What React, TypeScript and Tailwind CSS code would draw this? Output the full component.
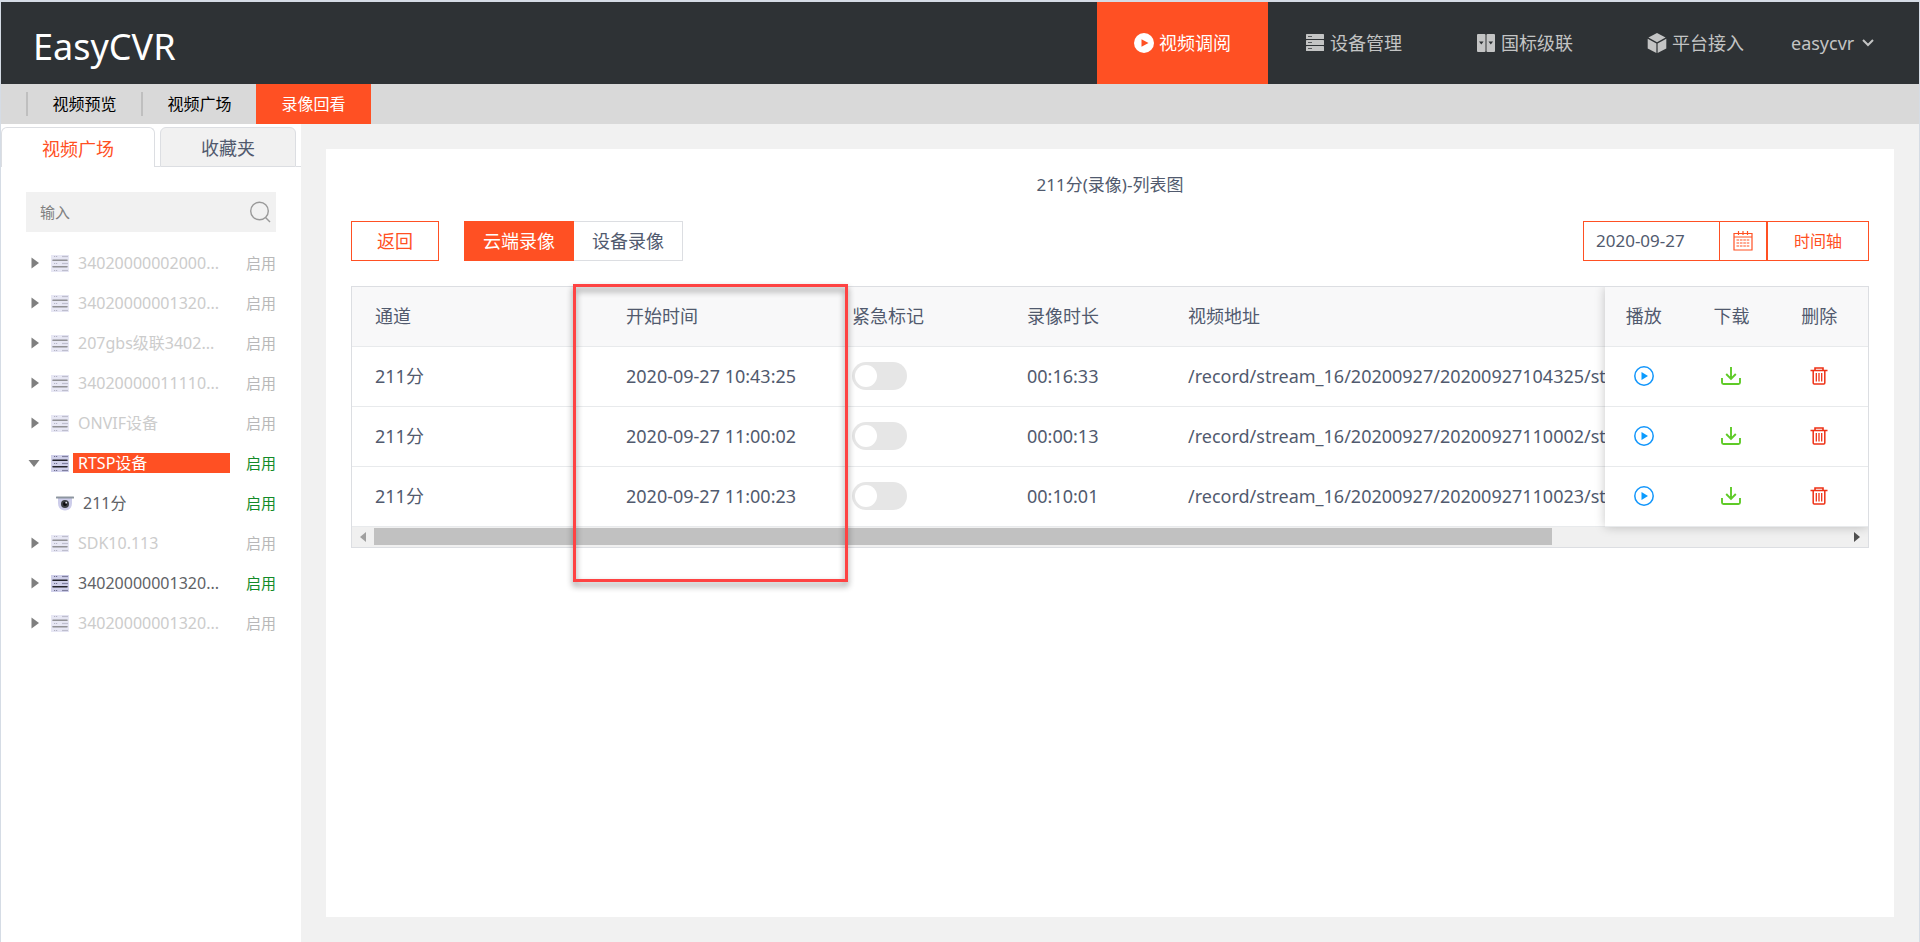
import { useState } from "react";
import type { ReactNode } from "react";

const NAV: { label: string; icon: ReactNode; active?: boolean }[] = [
  { label: "视频调阅", icon: <PlayBadge />, active: true },
  { label: "设备管理", icon: <ServerIcon /> },
  { label: "国标级联", icon: <CascadeIcon /> },
  { label: "平台接入", icon: <CubeIcon /> },
];

type Node = { name: string; online?: boolean; open?: boolean; camera?: boolean; selected?: boolean };

const TREE: Node[] = [
  { name: "34020000002000..." },
  { name: "34020000001320..." },
  { name: "207gbs级联3402..." },
  { name: "34020000011110..." },
  { name: "ONVIF设备" },
  { name: "RTSP设备", online: true, open: true, selected: true },
  { name: "211分", online: true, camera: true },
  { name: "SDK10.113" },
  { name: "34020000001320...", online: true },
  { name: "34020000001320..." },
];

const RECORDS = [
  { channel: "211分", start: "2020-09-27 10:43:25", length: "00:16:33", url: "/record/stream_16/20200927/20200927104325/st" },
  { channel: "211分", start: "2020-09-27 11:00:02", length: "00:00:13", url: "/record/stream_16/20200927/20200927110002/st" },
  { channel: "211分", start: "2020-09-27 11:00:23", length: "00:10:01", url: "/record/stream_16/20200927/20200927110023/st" },
];

function PlayBadge() {
  return (
    <svg viewBox="0 0 20 20" className="size-5" aria-hidden="true">
      <circle cx="10" cy="10" r="10" fill="#fff" />
      <path d="M7.5 6.2v7.6l7-3.8z" fill="#ff5023" />
    </svg>
  );
}

function ServerIcon() {
  return (
    <svg viewBox="0 0 20 20" className="size-5" aria-hidden="true">
      {[1, 7, 13].map((y) => (
        <g key={y}>
          <rect x="1" y={y} width="18" height="5" rx="0.6" fill="#c3c4c4" />
          <rect x="3" y={y + 2} width="4" height="1" fill="#55585a" />
        </g>
      ))}
    </svg>
  );
}

function CascadeIcon() {
  return (
    <svg viewBox="0 0 20 20" className="size-5" aria-hidden="true">
      <rect x="1" y="1" width="8.5" height="18" rx="1" fill="#c3c4c4" />
      <rect x="10.5" y="1" width="8.5" height="18" rx="1" fill="#c3c4c4" />
      <path d="M3 8.5h4.6L5.3 11.5zM12.5 8.5h4.6l-2.3 3z" fill="#2e3235" />
    </svg>
  );
}

function CubeIcon() {
  return (
    <svg viewBox="0 0 20 20" className="size-5" aria-hidden="true">
      <path d="M10 0l8.6 4.6L10 9.2 1.4 4.6z" fill="#c3c4c4" />
      <path d="M.7 5.8l8.7 4.6V20L.7 15.4z" fill="#c3c4c4" />
      <path d="M19.3 5.8l-8.7 4.6V20l8.7-4.6z" fill="#c3c4c4" />
    </svg>
  );
}

function DeviceIcon({ online }: { online?: boolean }) {
  return (
    <svg viewBox="0 0 18 17" className={online ? "h-[17px] w-[18px] shrink-0" : "h-[17px] w-[18px] shrink-0 opacity-50"} aria-hidden="true">
      <rect width="18" height="17" fill="#d0d0ea" />
      {[0, 7, 14].map((y) => (
        <g key={y}>
          <path d={`M3 ${y + 1.5}h1.2M5 ${y + 1.5}h1.2`} stroke="#6d6d8c" />
          <path d={`M11 ${y + 1.5}h6`} stroke="#7f7f9f" strokeWidth="1.2" />
        </g>
      ))}
      <path d="M2 5.3h14M2 11.7h14" stroke="#25252d" strokeWidth="1.6" strokeLinecap="round" />
    </svg>
  );
}

function CameraIcon() {
  return (
    <svg viewBox="0 0 18 15" className="h-[15px] w-[18px] shrink-0" aria-hidden="true">
      <path d="M2 2h14v5c0 5-3 7.500-7 7.500S2 12 2 7z" fill="#cdcdea" />
      <rect x="0" y="0.500" width="18" height="2" rx="0.500" fill="#8d96a0" />
      <circle cx="9" cy="8" r="4" fill="#3c3f45" />
      <circle cx="9" cy="8" r="2" fill="#0c0c10" />
      <circle cx="10.200" cy="6.700" r="0.900" fill="#e8e8f4" />
    </svg>
  );
}

function CalendarIcon() {
  return (
    <svg viewBox="0 0 20 20" className="size-5" fill="none" stroke="#ff5023" aria-hidden="true">
      <path d="M1 2.500h18v16.500H1zM1 6h18" strokeWidth="1.200" />
      <path d="M5.500 0v4M10 0v4M14.500 0v4" strokeWidth="1.200" />
      <path d="M3.500 9h13M3.500 12h13M3.500 15h13" strokeWidth="1.200" strokeDasharray="2.600 0.800" />
    </svg>
  );
}

function PlayIcon() {
  return (
    <svg viewBox="0 0 20 20" className="size-5" aria-hidden="true">
      <circle cx="10" cy="10" r="9.200" fill="none" stroke="#1296fb" strokeWidth="1.500" />
      <path d="M7.500 6v8l6.500-4z" fill="#0a9bff" />
    </svg>
  );
}

function DownloadIcon() {
  return (
    <svg viewBox="0 0 20 20" className="size-5" fill="none" stroke="#5fcb28" strokeWidth="1.900" aria-hidden="true">
      <path d="M1 12v4.500q0 1.500 1.500 1.500h15q1.500 0 1.500-1.500V12" />
      <path d="M10 1v12M5.200 8l4.800 5 4.800-5" />
    </svg>
  );
}

function TrashIcon() {
  return (
    <svg viewBox="0 0 20 20" className="size-5" fill="none" stroke="#ee3115" strokeWidth="1.500" aria-hidden="true">
      <path d="M1.500 4.500h17M6 4.500V2h8v2.500" strokeWidth="1.600" />
      <path d="M4.200 4.500v12.500q0 1 1 1h9.600q1 0 1-1V4.500" />
      <path d="M7.300 7v8.500M10 7v8.500M12.700 7v8.500" strokeWidth="1.300" />
    </svg>
  );
}

function Arrow({ open }: { open?: boolean }) {
  return (
    <svg viewBox="0 0 12 12" className="size-3 shrink-0" fill="#7f7f7f" aria-hidden="true">
      {open ? <path d="M.5 3h11L6 10z" /> : <path d="M3.500 .5v11L11 6z" />}
    </svg>
  );
}

function TreeRow({ node }: { node: Node }) {
  const nameClass = node.selected
    ? "bg-[#ff5023] text-white"
    : node.online
      ? "text-[#606266]"
      : "text-[#cccccc]";
  return (
    <li className="flex h-10 items-center">
      {node.camera ? (
        <span className="flex w-12 shrink-0 justify-end">
          <CameraIcon />
        </span>
      ) : (
        <button
          type="button"
          aria-label={node.name}
          aria-expanded={!!node.open}
          className="flex w-[43px] shrink-0 items-center justify-between pl-[2px]"
        >
          <Arrow open={node.open} />
          <DeviceIcon online={node.online} />
        </button>
      )}
      <span className={`ml-1 h-5 min-w-0 flex-1 truncate pl-[5px] text-base leading-5 ${nameClass}`}>{node.name}</span>
      <span className={`w-[46px] shrink-0 text-right text-[15px] leading-5 ${node.online ? "text-[#128a28]" : "text-[#b8b8b8]"}`}>
        启用
      </span>
    </li>
  );
}

function Toggle({ label }: { label: string }) {
  return (
    <label className="flex w-[55px] cursor-pointer">
      <input type="checkbox" role="switch" aria-label={label} className="peer sr-only" />
      <span className="flex h-7 w-full items-center rounded-full bg-[#e6e6e6] px-[3px] peer-checked:justify-end peer-checked:bg-[#ff5023]">
        <span className="size-[22px] rounded-full bg-white" />
      </span>
    </label>
  );
}

export default function App() {
  const [date, setDate] = useState("2020-09-27");
  return (
    <div className="flex min-h-screen flex-col border-x border-t-2 border-[#d5dce5] bg-[#f1f1f1] font-['Noto_Sans','Noto_Sans_CJK_SC',sans-serif] text-[#515a6e]">
      <header className="flex h-[82px] bg-[#2e3235]">
        <h1 className="flex flex-1 items-center pt-2 pl-8 text-4xl leading-[44px] text-white">EasyCVR</h1>
        <nav className="flex">
          {NAV.map((n) => (
            <a
              key={n.label}
              href="#"
              className={`flex w-[171px] items-center justify-center gap-[5px] text-lg leading-6 ${n.active ? "bg-[#ff5023] text-white" : "text-[#c3c4c4]"}`}
            >
              {n.icon}
              {n.label}
            </a>
          ))}
        </nav>
        <button type="button" className="flex w-[138px] items-center gap-2 pl-[10px] text-lg leading-6 text-[#c3c4c4]">
          easycvr
          <svg viewBox="0 0 12 8" className="h-2 w-3" fill="none" stroke="#c3c4c4" strokeWidth="2" aria-hidden="true">
            <path d="M1 1l5 5 5-5" />
          </svg>
        </button>
      </header>

      <nav className="flex h-10 items-center bg-[#d9d9d9] pl-[25px] text-base text-black">
        <a href="#" className="flex h-6 w-[115px] items-center justify-center border-l-2 border-[#bfbfbf]">视频预览</a>
        <a href="#" className="flex h-6 w-[115px] items-center justify-center border-l-2 border-[#bfbfbf]">视频广场</a>
        <a href="#" className="flex h-10 w-[115px] items-center justify-center bg-[#ff5023] text-white">录像回看</a>
      </nav>

      <div className="flex flex-1">
        <aside className="w-[300px] shrink-0 bg-white pt-[3px]">
          <div role="tablist" className="flex h-10 text-lg leading-6">
            <button type="button" role="tab" aria-selected="true" className="w-[154px] rounded-t-md border border-b-0 border-[#dcdee2] pt-[2px] text-[#ff5023]">
              视频广场
            </button>
            <span className="w-[5px] border-b border-[#dcdee2]" />
            <button type="button" role="tab" aria-selected="false" className="w-[136px] rounded-t-md border border-[#dcdee2] bg-[#f1f1f1] pt-[2px]">
              收藏夹
            </button>
            <span className="flex-1 border-b border-[#dcdee2]" />
          </div>
          <div className="px-[25px] pt-[25px]">
            <label className="flex h-10 items-center bg-[#f1f1f1] pr-[5px] pl-[14px]">
              <input
                type="text"
                aria-label="输入"
                placeholder="输入"
                className="min-w-0 flex-1 bg-transparent text-[15px] outline-none placeholder:text-[#808080]"
              />
              <svg viewBox="0 0 22 22" className="size-[22px]" fill="none" stroke="#999" strokeWidth="1.400" aria-hidden="true">
                <circle cx="10.500" cy="10" r="8.800" />
                <path d="M16.500 16.500l4.500 4.500" />
              </svg>
            </label>
            <ul className="pt-[11px]">
              {TREE.map((n, i) => (
                <TreeRow key={i} node={n} />
              ))}
            </ul>
          </div>
        </aside>

        <main className="flex min-w-0 flex-1 flex-col p-[25px]">
          <section className="flex-1 bg-white px-[25px] pt-6">
            <h2 className="text-center text-[17px] leading-6">211分(录像)-列表图</h2>

            <div className="mt-6 flex h-10 items-stretch text-lg leading-6">
              <button type="button" className="w-[88px] border border-[#ff5023] text-[#ff5023]">返回</button>
              <div className="ml-[25px] flex">
                <button type="button" className="w-[110px] bg-[#ff5023] text-white">云端录像</button>
                <button type="button" className="w-[109px] border border-l-0 border-[#dcdee2]">设备录像</button>
              </div>
              <div className="ml-auto flex w-[184px] border border-[#ff5023] text-[17px]">
                <input
                  type="text"
                  aria-label="日期"
                  value={date}
                  onChange={(e) => setDate(e.target.value)}
                  className="min-w-0 flex-1 pl-3 outline-none"
                />
                <button type="button" aria-label="选择日期" className="flex w-[47px] items-center justify-center border-l border-[#ff5023]">
                  <CalendarIcon />
                </button>
              </div>
              <button type="button" className="w-[102px] border border-[#ff5023] text-base text-[#ff5023]">时间轴</button>
            </div>

            <div className="relative mt-[25px] border border-[#dcdee2] text-lg leading-6">
              <div className="overflow-hidden">
                <div className="flex">
                  <div className="min-w-0 flex-1 overflow-hidden">
                    <table className="w-[1600px] table-fixed border-collapse text-left">
                      <thead>
                        <tr className="h-[59px] border-b border-[#e8eaec] bg-[#f8f8f9]">
                          <th className="w-[251px] pl-[23px] font-normal">通道</th>
                          <th className="w-[226px] pl-[23px] font-normal">开始时间</th>
                          <th className="w-[175px] pl-[23px] font-normal">紧急标记</th>
                          <th className="w-[161px] pl-[23px] font-normal">录像时长</th>
                          <th className="pl-[23px] font-normal">视频地址</th>
                        </tr>
                      </thead>
                      <tbody>
                        {RECORDS.map((r) => (
                          <tr key={r.start} className="h-[60px] border-b border-[#e8eaec]">
                            <td className="pl-[23px]">{r.channel}</td>
                            <td className="pl-[23px] whitespace-nowrap">{r.start}</td>
                            <td className="pl-[23px]">
                              <Toggle label={`紧急标记 ${r.start}`} />
                            </td>
                            <td className="pl-[23px]">{r.length}</td>
                            <td className="pl-[23px] whitespace-nowrap">{r.url}</td>
                          </tr>
                        ))}
                      </tbody>
                    </table>
                  </div>
                  <div className="relative w-[263px] shrink-0 bg-white shadow-[0_0_10px_rgba(0,0,0,0.22)]">
                    <table className="w-full table-fixed border-collapse text-center">
                      <thead>
                        <tr className="h-[59px] border-b border-[#e8eaec] bg-[#f8f8f9]">
                          <th className="pr-[10px] font-normal">播放</th>
                          <th className="pr-[10px] font-normal">下载</th>
                          <th className="pr-[10px] font-normal">删除</th>
                        </tr>
                      </thead>
                      <tbody>
                        {RECORDS.map((r) => (
                          <tr key={r.start} className="h-[60px] border-b border-[#e8eaec]">
                            <td className="pr-[10px]">
                              <button type="button" aria-label="播放" className="mx-auto block"><PlayIcon /></button>
                            </td>
                            <td className="pr-[10px]">
                              <button type="button" aria-label="下载" className="mx-auto block"><DownloadIcon /></button>
                            </td>
                            <td className="pr-[10px]">
                              <button type="button" aria-label="删除" className="mx-auto block"><TrashIcon /></button>
                            </td>
                          </tr>
                        ))}
                      </tbody>
                    </table>
                  </div>
                </div>

                <div className="flex h-5 items-center bg-[#f0f0f0] px-2">
                  <svg viewBox="0 0 6 10" className="h-[10px] w-[6px]" fill="#a0a0a0" aria-hidden="true"><path d="M6 0v10L0 5z" /></svg>
                  <div className="mx-2 flex-1">
                    <div className="h-[17px] w-4/5 bg-[#c1c1c1]" />
                  </div>
                  <svg viewBox="0 0 6 10" className="h-[10px] w-[6px]" fill="#505050" aria-hidden="true"><path d="M0 0v10l6-5z" /></svg>
                </div>
              </div>

              <div className="pointer-events-none absolute -top-[3px] left-[221px] h-[298px] w-[275px] border-3 border-[#fe4343] drop-shadow-[0_4px_3px_rgba(0,0,0,0.45)]" />
            </div>
          </section>
        </main>
      </div>
    </div>
  );
}
